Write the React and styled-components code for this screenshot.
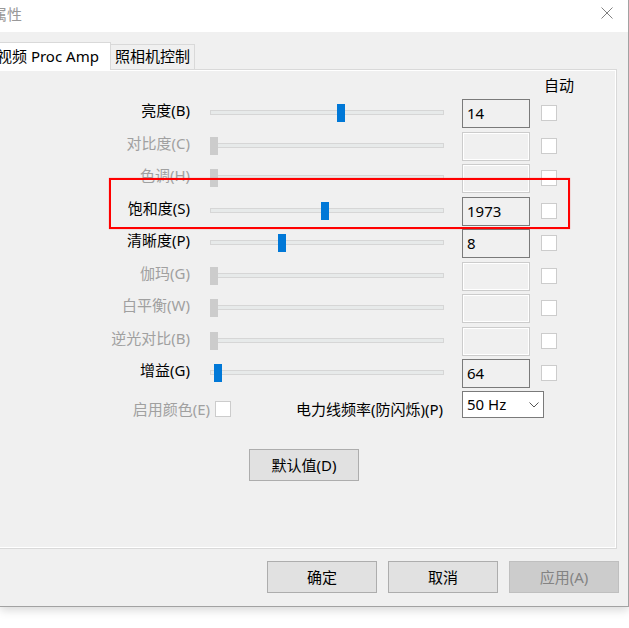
import React from "react";
import styled, { createGlobalStyle } from "styled-components";

const Global = createGlobalStyle`
  html, body { margin: 0; padding: 0; background: #fff; }
`;

const Root = styled.div`
  position: relative;
  width: 629px;
  height: 628px;
  overflow: hidden;
  background: #fff;
  font-family: "Noto Sans", "Noto Sans CJK SC", sans-serif;
  font-size: 15px;
  color: #000;
`;

const Window = styled.div`
  width: 629px;
  height: 607px;
  box-sizing: border-box;
  border-right: 1px solid #a2a2a2;
  border-bottom: 1px solid #a2a2a2;
  background: #f0f0f0;
  box-shadow: 0 3px 9px rgba(0, 0, 0, 0.16);
  display: flex;
  flex-direction: column;
`;

const TitleBar = styled.div`
  height: 32px;
  flex-shrink: 0;
  background: #fff;
  display: flex;
  justify-content: space-between;
  align-items: flex-start;
`;

const Title = styled.div`
  margin-left: -8px;
  line-height: 28px;
  color: #999;
`;

const CloseIcon = styled.svg`
  width: 12px;
  height: 12px;
  margin-top: 7px;
  margin-right: 15px;
`;

const Body = styled.div`
  padding-top: 10px;
  display: flex;
  flex-direction: column;
`;

const TabRow = styled.div`
  display: flex;
  align-items: flex-end;
  margin-left: -12px;
  height: 28px;
`;

const Tab = styled.div`
  box-sizing: border-box;
  border: 1px solid #d9d9d9;
  border-bottom: none;
  white-space: nowrap;
  ${(p) =>
    p.$active
      ? `
    position: relative;
    z-index: 1;
    width: 123px;
    height: 28px;
    padding-left: 8px;
    line-height: 26px;
    background: #fff;
  `
      : `
    width: 84px;
    height: 25px;
    margin-bottom: 1px;
    border-left: none;
    line-height: 23px;
    text-align: center;
    background: #f0f0f0;
  `}
`;

const Panel = styled.div`
  margin-left: -12px;
  margin-top: -1px;
  width: 629px;
  height: 480px;
  box-sizing: border-box;
  border: 1px solid #d9d9d9;
  box-shadow: inset 0 0 0 1px #fff;
  padding: 4px 0 0 111px;
`;

const columns = "110px 252px 79px 16px";

const Header = styled.div`
  display: grid;
  grid-template-columns: ${columns};
  height: 22px;
  margin-bottom: 3px;
`;

const AutoLabel = styled.div`
  grid-column: 4;
  margin-left: 3px;
  white-space: nowrap;
  line-height: 22px;
`;

const Controls = styled.div`
  display: grid;
  grid-template-columns: ${columns};
  grid-auto-rows: 29px;
  row-gap: 3.5px;
`;

const Label = styled.div`
  justify-self: end;
  align-self: start;
  padding-right: 20px;
  line-height: 22px;
  white-space: nowrap;
  color: ${(p) => (p.$disabled ? "#a0a0a0" : "#000")};
`;

const SliderCell = styled.div`
  align-self: start;
  width: 234px;
  padding-top: 11px;
`;

const Track = styled.div`
  position: relative;
  height: 5px;
  box-sizing: border-box;
  border: 1px solid #d6d6d6;
  background: #e7eaea;
`;

const Thumb = styled.div`
  position: absolute;
  top: -7px;
  left: ${(p) => p.$pos - 1}px;
  width: 8px;
  height: 18px;
  background: ${(p) => (p.$disabled ? "#cccccc" : "#0078d7")};
`;

const ValueBox = styled.div`
  width: 68px;
  height: 29px;
  box-sizing: border-box;
  border: 1px solid ${(p) => (p.$disabled ? "#cccccc" : "#7a7a7a")};
  box-shadow: ${(p) => (p.$disabled ? "inset 0 0 0 1px #fff" : "none")};
  background: #f0f0f0;
  padding-left: 4px;
  line-height: 27px;
`;

const Check = styled.div`
  width: 16px;
  height: 16px;
  box-sizing: border-box;
  border: 1px solid #cccccc;
  background: #fff;
  align-self: start;
  margin-top: ${(p) => p.$top ?? 6}px;
`;

const OptionsRow = styled.div`
  display: flex;
  align-items: flex-start;
  margin-top: 3px;
`;

const EnableGroup = styled.div`
  width: 131px;
  display: flex;
  justify-content: flex-end;
  align-items: flex-start;
  gap: 5px;
`;

const InlineText = styled.div`
  line-height: 22px;
  margin-top: 7px;
  white-space: nowrap;
  color: ${(p) => (p.$disabled ? "#a0a0a0" : "#000")};
`;

const PowerLabel = styled(InlineText)`
  width: 231px;
  box-sizing: border-box;
  text-align: right;
  padding-right: 19px;
`;

const Combo = styled.div`
  width: 82px;
  height: 27px;
  box-sizing: border-box;
  border: 1px solid #7a7a7a;
  background: #fff;
  display: flex;
  align-items: center;
  justify-content: space-between;
  padding: 0 4px 0 4px;
  line-height: 25px;
`;

const Button = styled.div`
  width: 110px;
  height: 32px;
  box-sizing: border-box;
  border: 1px solid ${(p) => (p.$disabled ? "#bfbfbf" : "#adadad")};
  background: ${(p) => (p.$disabled ? "#cccccc" : "#e1e1e1")};
  color: ${(p) => (p.$disabled ? "#838383" : "#000")};
  display: flex;
  align-items: center;
  justify-content: center;
  line-height: 30px;
  white-space: nowrap;
`;

const DefaultButton = styled(Button)`
  margin-top: 29px;
  margin-left: 149px;
`;

const ButtonBar = styled.div`
  margin-top: 12px;
  display: flex;
  justify-content: flex-end;
  gap: 11px;
  padding-right: 9px;
`;

const Highlight = styled.div`
  position: absolute;
  left: 109px;
  top: 178px;
  width: 461px;
  height: 51px;
  box-sizing: border-box;
  border: 2px solid #ff0000;
  box-shadow: 0 0 1px rgba(255, 0, 0, 0.5);
  pointer-events: none;
`;

const rows = [
  { label: "亮度(B)", pos: 127, value: "14" },
  { label: "对比度(C)", disabled: true },
  { label: "色调(H)", disabled: true },
  { label: "饱和度(S)", pos: 111, value: "1973" },
  { label: "清晰度(P)", pos: 68, value: "8" },
  { label: "伽玛(G)", disabled: true },
  { label: "白平衡(W)", disabled: true },
  { label: "逆光对比(B)", disabled: true },
  { label: "增益(G)", pos: 4, value: "64" },
];

export default function App() {
  return (
    <Root>
      <Global />
      <Window>
        <TitleBar>
          <Title>属性</Title>
          <CloseIcon viewBox="0 0 12 12">
            <path d="M0.5 0.5 L11.5 11.5 M11.5 0.5 L0.5 11.5" stroke="#808080" strokeWidth="1" fill="none" />
          </CloseIcon>
        </TitleBar>
        <Body>
          <TabRow>
            <Tab $active>视频 Proc Amp</Tab>
            <Tab>照相机控制</Tab>
          </TabRow>
          <Panel>
            <Header>
              <AutoLabel>自动</AutoLabel>
            </Header>
            <Controls>
              {rows.map((r) => (
                <React.Fragment key={r.label}>
                  <Label $disabled={r.disabled}>{r.label}</Label>
                  <SliderCell>
                    <Track>
                      <Thumb $pos={r.disabled ? 0 : r.pos} $disabled={r.disabled} />
                    </Track>
                  </SliderCell>
                  <ValueBox $disabled={r.disabled}>{r.value}</ValueBox>
                  <Check />
                </React.Fragment>
              ))}
            </Controls>
            <OptionsRow>
              <EnableGroup>
                <InlineText $disabled>启用颜色(E)</InlineText>
                <Check $top={10} />
              </EnableGroup>
              <PowerLabel>电力线频率(防闪烁)(P)</PowerLabel>
              <Combo>
                <span>50 Hz</span>
                <svg width="10" height="6" viewBox="0 0 10 6">
                  <path d="M0.5 0.5 L5 5 L9.5 0.5" stroke="#555" strokeWidth="1" fill="none" />
                </svg>
              </Combo>
            </OptionsRow>
            <DefaultButton>默认值(D)</DefaultButton>
          </Panel>
          <ButtonBar>
            <Button>确定</Button>
            <Button>取消</Button>
            <Button $disabled>应用(A)</Button>
          </ButtonBar>
        </Body>
      </Window>
      <Highlight />
    </Root>
  );
}
